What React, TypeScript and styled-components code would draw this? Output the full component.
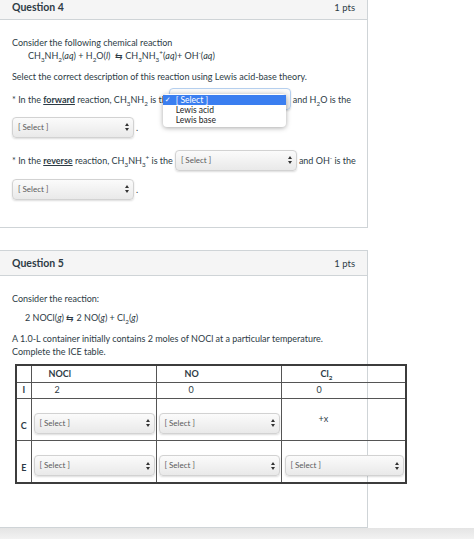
import React from 'react';
import styled, { createGlobalStyle } from 'styled-components';

const GlobalStyle = createGlobalStyle`
  html, body {
    margin: 0;
    padding: 0;
    background: #ffffff;
  }
  body {
    font-family: Lato, "Liberation Sans", sans-serif;
    color: #2d3b45;
  }
`;

const Page = styled.div`
  width: 474px;
  height: 539px;
  overflow: hidden;
  display: flex;
  flex-direction: column;
`;

const Panel = styled.section<{ $top: number; $height: number }>`
  box-sizing: border-box;
  width: 369px;
  height: ${p => p.$height}px;
  margin-top: ${p => p.$top}px;
  margin-left: -1px;
  border: 1px solid #cfd4d7;
  display: flex;
  flex-direction: column;
  flex-shrink: 0;
`;

const Header = styled.div`
  height: 24px;
  display: flex;
  align-items: center;
  justify-content: space-between;
  padding: 0 12px;
  background: #f5f5f5;
  border-bottom: 1px solid #cfd4d7;
  flex-shrink: 0;
`;

const Title = styled.span`
  font-size: 10.5px;
  font-weight: 700;
  color: #2d3b45;
`;

const Points = styled.span`
  font-size: 9.5px;
  color: #2d3b45;
`;

const Body = styled.div`
  padding: 16px 12px 0;
  font-size: 9px;
  line-height: 13px;
`;

const Line = styled.div<{ $gap?: number; $indent?: number }>`
  margin-top: ${p => p.$gap ?? 0}px;
  padding-left: ${p => p.$indent ?? 0}px;
  white-space: nowrap;
`;

const Row = styled.div<{ $gap: number }>`
  display: flex;
  align-items: center;
  gap: 2px;
  height: 22px;
  margin-top: ${p => p.$gap}px;
  white-space: nowrap;
`;

const U = styled.span`
  text-decoration: underline;
  font-weight: 700;
`;

const Sub = styled.sub`
  font-size: 70%;
  line-height: 0;
`;

const Sup = styled.sup`
  font-size: 70%;
  line-height: 0;
`;

const SelectBox = styled.div<{ $w?: number; $focused?: boolean }>`
  position: relative;
  box-sizing: border-box;
  width: ${p => p.$w ?? 122}px;
  height: ${p => (p.$focused ? 22 : 21)}px;
  flex-shrink: 0;
  display: flex;
  align-items: center;
  justify-content: space-between;
  padding: 0 4px 0 5px;
  border: 1px solid ${p => (p.$focused ? '#b5cfee' : '#d2d2d2')};
  border-radius: 4px;
  background: linear-gradient(#fbfbfb, #e9e9e9);
  box-shadow: 0 1px 2px rgba(0, 0, 0, 0.14);
  font-size: 8px;
  color: #5a5a5a;
`;

const Popup = styled.div`
  position: absolute;
  left: -7px;
  top: 5px;
  width: 123px;
  padding: 1px 0 2px;
  background: #ffffff;
  border-radius: 4px;
  box-shadow: 0 1px 5px rgba(0, 0, 0, 0.35);
  z-index: 2;
`;

const Option = styled.div<{ $active?: boolean }>`
  display: flex;
  align-items: center;
  height: 10px;
  padding-left: 2px;
  font-size: 8.5px;
  line-height: 10px;
  color: ${p => (p.$active ? '#ffffff' : '#222')};
  background: ${p => (p.$active ? '#3a7ef0' : 'transparent')};
`;

const Check = styled.span`
  width: 11px;
  flex-shrink: 0;
  font-family: "DejaVu Sans", sans-serif;
  font-size: 7px;
`;

const Arrows = () => (
  <svg width="4" height="8" viewBox="0 0 4 8">
    <path d="M2 0 L4 3 L0 3 Z M2 8 L4 5 L0 5 Z" fill="#333" />
  </svg>
);

const Select = ({ w, open }: { w?: number; open?: boolean }) => (
  <SelectBox $w={w} $focused={open}>
    <span>[ Select ]</span>
    <Arrows />
    {open && (
      <Popup>
        <Option $active>
          <Check>✓</Check>[ Select ]
        </Option>
        <Option>
          <Check />Lewis acid
        </Option>
        <Option>
          <Check />Lewis base
        </Option>
      </Popup>
    )}
  </SelectBox>
);

const Table = styled.table`
  margin: 6px 0 0 3px;
  border-collapse: collapse;
  border: 2px solid #3c3c3c;
  table-layout: fixed;
  width: 390px;
  font-size: 9px;
`;

const Cell = styled.td<{ $pad?: number; $h?: number; $bold?: boolean; $align?: string }>`
  border: 1px solid #555;
  height: ${p => p.$h ?? 16}px;
  padding: 0 0 0 ${p => p.$pad ?? 2}px;
  text-align: ${p => p.$align ?? 'left'};
  vertical-align: middle;
  font-weight: ${p => (p.$bold ? 700 : 400)};
  line-height: 10px;
  box-sizing: border-box;
`;

const SelectCell = styled.td<{ $pad?: number }>`
  border: 1px solid #555;
  padding: 0 0 6px ${p => p.$pad ?? 2}px;
  vertical-align: bottom;
`;

const LabelCell = styled.td`
  border: 1px solid #555;
  padding: 0 0 9px;
  text-align: center;
  vertical-align: bottom;
  font-weight: 700;
  line-height: 10px;
`;

const Footer = styled.div`
  flex: 1;
  background: linear-gradient(#e4e4e4, #f2f2f2);
`;

export default function App() {
  return (
    <Page>
      <GlobalStyle />
      <Panel $top={-6} $height={234}>
        <Header>
          <Title>Question 4</Title>
          <Points>1 pts</Points>
        </Header>
        <Body>
          <Line>Consider the following chemical reaction</Line>
          <Line $indent={16}>
            CH<Sub>3</Sub>NH<Sub>2</Sub>(<i>aq</i>) + H<Sub>2</Sub>O(<i>l</i>) &nbsp;⇆ CH<Sub>3</Sub>NH<Sub>3</Sub>
            <Sup>+</Sup>(<i>aq</i>)+ OH<Sup>-</Sup>(<i>aq</i>)
          </Line>
          <Line $gap={8}>Select the correct description of this reaction using Lewis acid-base theory.</Line>
          <Row $gap={5}>
            <span>
              * In the <U>forward</U> reaction, CH<Sub>3</Sub>NH<Sub>2</Sub> is th
            </span>
            <Select open />
            <span>
              and H<Sub>2</Sub>O is the
            </span>
          </Row>
          <Row $gap={6}>
            <Select />
            <span>.</span>
          </Row>
          <Row $gap={11}>
            <span>
              * In the <U>reverse</U> reaction, CH<Sub>3</Sub>NH<Sub>3</Sub>
              <Sup>+</Sup> is the
            </span>
            <Select />
            <span>
              and OH<Sup>-</Sup> is the
            </span>
          </Row>
          <Row $gap={7}>
            <Select />
            <span>.</span>
          </Row>
        </Body>
      </Panel>

      <Panel $top={22} $height={278}>
        <Header>
          <Title>Question 5</Title>
          <Points>1 pts</Points>
        </Header>
        <Body>
          <Line>Consider the reaction:</Line>
          <Line $gap={6} $indent={13}>
            2 NOCl(<i>g</i>) ⇆ 2 NO(<i>g</i>) + Cl<Sub>2</Sub>(<i>g</i>)
          </Line>
          <Line $gap={8}>A 1.0-L container initially contains 2 moles of NOCl at a particular temperature.</Line>
          <Line>Complete the ICE table.</Line>
          <Table>
            <colgroup>
              <col style={{ width: 15 }} />
              <col style={{ width: 125 }} />
              <col style={{ width: 125 }} />
              <col style={{ width: 125 }} />
            </colgroup>
            <tbody>
              <tr>
                <Cell $h={17} />
                <Cell $h={17} $pad={17} $bold>NOCl</Cell>
                <Cell $h={17} $pad={28} $bold>NO</Cell>
                <Cell $h={17} $pad={39} $bold>
                  Cl<Sub>2</Sub>
                </Cell>
              </tr>
              <tr>
                <Cell $pad={0} $align="center" $bold>I</Cell>
                <Cell $pad={23}>2</Cell>
                <Cell $pad={32}>0</Cell>
                <Cell $pad={35}>0</Cell>
              </tr>
              <tr style={{ height: 42 }}>
                <LabelCell>C</LabelCell>
                <SelectCell>
                  <Select w={121} />
                </SelectCell>
                <SelectCell>
                  <Select w={121} />
                </SelectCell>
                <Cell $h={42} $pad={37}>+x</Cell>
              </tr>
              <tr style={{ height: 43 }}>
                <LabelCell>E</LabelCell>
                <SelectCell>
                  <Select w={121} />
                </SelectCell>
                <SelectCell>
                  <Select w={121} />
                </SelectCell>
                <SelectCell $pad={3}>
                  <Select w={119} />
                </SelectCell>
              </tr>
            </tbody>
          </Table>
        </Body>
      </Panel>
      <Footer />
    </Page>
  );
}
